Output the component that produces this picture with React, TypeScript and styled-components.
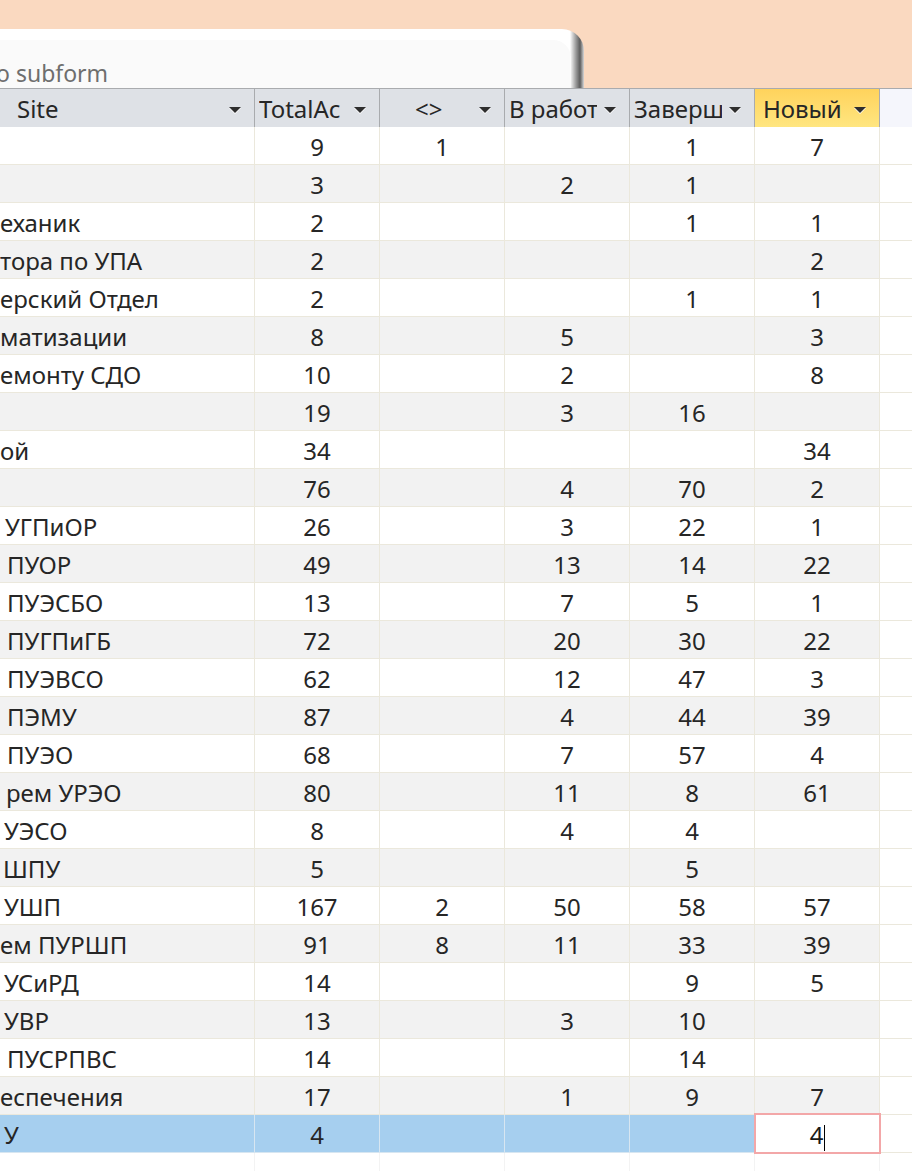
import React from 'react'
import styled, { createGlobalStyle, css } from 'styled-components'

const GlobalStyle = createGlobalStyle`
  html, body {
    margin: 0;
    padding: 0;
    background: #ffffff;
    overflow: hidden;
  }
  body {
    font-family: 'Noto Sans', 'Open Sans', sans-serif;
    color: #262626;
  }
`

const Page = styled.div`
  width: 912px;
  height: 1171px;
  overflow: hidden;
  background: #ffffff;
`

const TopBand = styled.div`
  height: 88px;
  background: #fad9c0;
  display: flex;
  align-items: flex-end;
`

const TabFrame = styled.div`
  width: 584px;
  height: 59px;
  background: #ffffff;
  border-top-right-radius: 22px;
  box-sizing: border-box;
  padding: 11px 13px 0 0;
  display: flex;
  background-image: linear-gradient(
    to right,
    #ffffff 0,
    #ffffff 570px,
    #9a9a9a 576px,
    #5c5c5c 580px,
    #d8d8d8 584px
  );
`

const TabInner = styled.div`
  flex: 1;
  background: #fafafa;
  border-top-right-radius: 18px;
  display: flex;
  align-items: flex-end;
  overflow: hidden;
`

const TabTitle = styled.span`
  font-size: 23px;
  line-height: 30px;
  color: #6e6e6e;
  margin-left: -4px;
  white-space: nowrap;
`

const columns = '255px repeat(5, 125px) 40px'

const HeaderRow = styled.div`
  display: grid;
  grid-template-columns: ${columns};
  height: 39px;
  border-top: 1px solid #a9abae;
  box-sizing: border-box;
`

const HeaderCell = styled.div<{ $active?: boolean; $pad?: number; $blank?: boolean }>`
  position: relative;
  display: flex;
  align-items: center;
  box-sizing: border-box;
  padding-left: ${(p) => p.$pad ?? 4}px;
  padding-right: 32px;
  border-right: 1px solid #a9abae;
  background: ${(p) =>
    p.$active
      ? 'linear-gradient(to bottom, #ffd35c 0%, #ffe680 100%)'
      : p.$blank
        ? '#f5f6fc'
        : '#dee1e6'};
  font-size: 24px;
  color: #262626;
  overflow: hidden;
  ${(p) =>
    p.$blank &&
    css`
      border-right: none;
    `}
`

const HeaderText = styled.span`
  white-space: nowrap;
  overflow: hidden;
`

const DropArrow = styled.span`
  position: absolute;
  right: 13px;
  top: 18px;
  width: 0;
  height: 0;
  border-left: 6px solid transparent;
  border-right: 6px solid transparent;
  border-top: 6px solid #2e2e2e;
  filter: drop-shadow(0 1px 0 #ffffff);
`

const Row = styled.div<{ $alt?: boolean; $selected?: boolean }>`
  display: grid;
  grid-template-columns: ${columns};
  height: 38px;
  background: ${(p) => (p.$selected ? '#a6cfef' : p.$alt ? '#f2f2f2' : '#ffffff')};
`

const Cell = styled.div<{ $left?: boolean; $indent?: number; $selected?: boolean }>`
  display: flex;
  align-items: center;
  justify-content: ${(p) => (p.$left ? 'flex-start' : 'center')};
  padding-left: ${(p) => (p.$left ? p.$indent ?? 1 : 0)}px;
  padding-top: 2px;
  box-sizing: border-box;
  border-right: 1px solid ${(p) => (p.$selected ? '#d7e6f1' : '#ebe8dc')};
  border-bottom: 1px solid ${(p) => (p.$selected ? '#d7e6f1' : '#ebe8dc')};
  font-size: 24px;
  color: #262626;
  white-space: nowrap;
  overflow: hidden;
`

const Filler = styled.div`
  background: #ffffff;
  border-bottom: 1px solid #ebe8dc;
`

const FocusCell = styled.div`
  position: relative;
  display: flex;
  align-items: center;
  justify-content: center;
  box-sizing: border-box;
  padding-top: 2px;
  background: #ffffff;
  border: 2px solid #f3a7a8;
  margin: -2px -1px -1px -1px;
  font-size: 24px;
  color: #1a1a1a;
`

const Caret = styled.span`
  display: inline-block;
  width: 1px;
  height: 26px;
  background: #000000;
  margin-left: 1px;
  margin-top: 6px;
`

const EmptyRow = styled.div`
  display: grid;
  grid-template-columns: ${columns};
  height: 60px;
`

const EmptyCell = styled.div`
  border-right: 1px solid #f3f3f3;
`

type Rec = [string, number, string, string, string, string, string]

const data: Rec[] = [
  ['', 0, '9', '1', '', '1', '7'],
  ['', 0, '3', '', '2', '1', ''],
  ['еханик', 0, '2', '', '', '1', '1'],
  ['тора по УПА', 0, '2', '', '', '', '2'],
  ['ерский Отдел', 0, '2', '', '', '1', '1'],
  ['матизации', 0, '8', '', '5', '', '3'],
  ['емонту СДО', 0, '10', '', '2', '', '8'],
  ['', 0, '19', '', '3', '16', ''],
  ['ой', 0, '34', '', '', '', '34'],
  ['', 0, '76', '', '4', '70', '2'],
  ['УГПиОР', 5, '26', '', '3', '22', '1'],
  ['ПУОР', 7, '49', '', '13', '14', '22'],
  ['ПУЭСБО', 7, '13', '', '7', '5', '1'],
  ['ПУГПиГБ', 7, '72', '', '20', '30', '22'],
  ['ПУЭВСО', 7, '62', '', '12', '47', '3'],
  ['ПЭМУ', 7, '87', '', '4', '44', '39'],
  ['ПУЭО', 7, '68', '', '7', '57', '4'],
  ['рем УРЭО', 6, '80', '', '11', '8', '61'],
  ['УЭСО', 4, '8', '', '4', '4', ''],
  ['ШПУ', 3, '5', '', '', '5', ''],
  ['УШП', 4, '167', '2', '50', '58', '57'],
  ['ем ПУРШП', 0, '91', '8', '11', '33', '39'],
  ['УСиРД', 4, '14', '', '', '9', '5'],
  ['УВР', 4, '13', '', '3', '10', ''],
  ['ПУСРПВС', 7, '14', '', '', '14', ''],
  ['еспечения', 0, '17', '', '1', '9', '7'],
]

const selected: Rec = ['У', 4, '4', '', '', '', '4']

const headers = [
  { label: 'Site', pad: 17 },
  { label: 'TotalAc', pad: 4 },
  { label: '<>', pad: 35 },
  { label: 'В работе', pad: 4 },
  { label: 'Завершено', pad: 4 },
  { label: 'Новый', pad: 8, active: true },
]

const App = () => {
  return (
    <Page>
      <GlobalStyle />
      <TopBand>
        <TabFrame>
          <TabInner>
            <TabTitle>o subform</TabTitle>
          </TabInner>
        </TabFrame>
      </TopBand>

      <HeaderRow>
        {headers.map((h) => (
          <HeaderCell key={h.label} $pad={h.pad} $active={h.active}>
            <HeaderText>{h.label}</HeaderText>
            <DropArrow />
          </HeaderCell>
        ))}
        <HeaderCell $blank />
      </HeaderRow>

      {data.map((r, i) => (
        <Row key={i} $alt={i % 2 === 1}>
          <Cell $left $indent={r[1]}>
            {r[0]}
          </Cell>
          {r.slice(2).map((v, j) => (
            <Cell key={j}>{v}</Cell>
          ))}
          <Filler />
        </Row>
      ))}

      <Row $selected>
        <Cell $left $indent={selected[1]} $selected>
          {selected[0]}
        </Cell>
        <Cell $selected>{selected[2]}</Cell>
        <Cell $selected>{selected[3]}</Cell>
        <Cell $selected>{selected[4]}</Cell>
        <Cell $selected>{selected[5]}</Cell>
        <FocusCell>
          {selected[6]}
          <Caret />
        </FocusCell>
        <Filler />
      </Row>

      <EmptyRow>
        {Array.from({ length: 7 }).map((_, i) => (
          <EmptyCell key={i} />
        ))}
      </EmptyRow>
    </Page>
  )
}

export default App
